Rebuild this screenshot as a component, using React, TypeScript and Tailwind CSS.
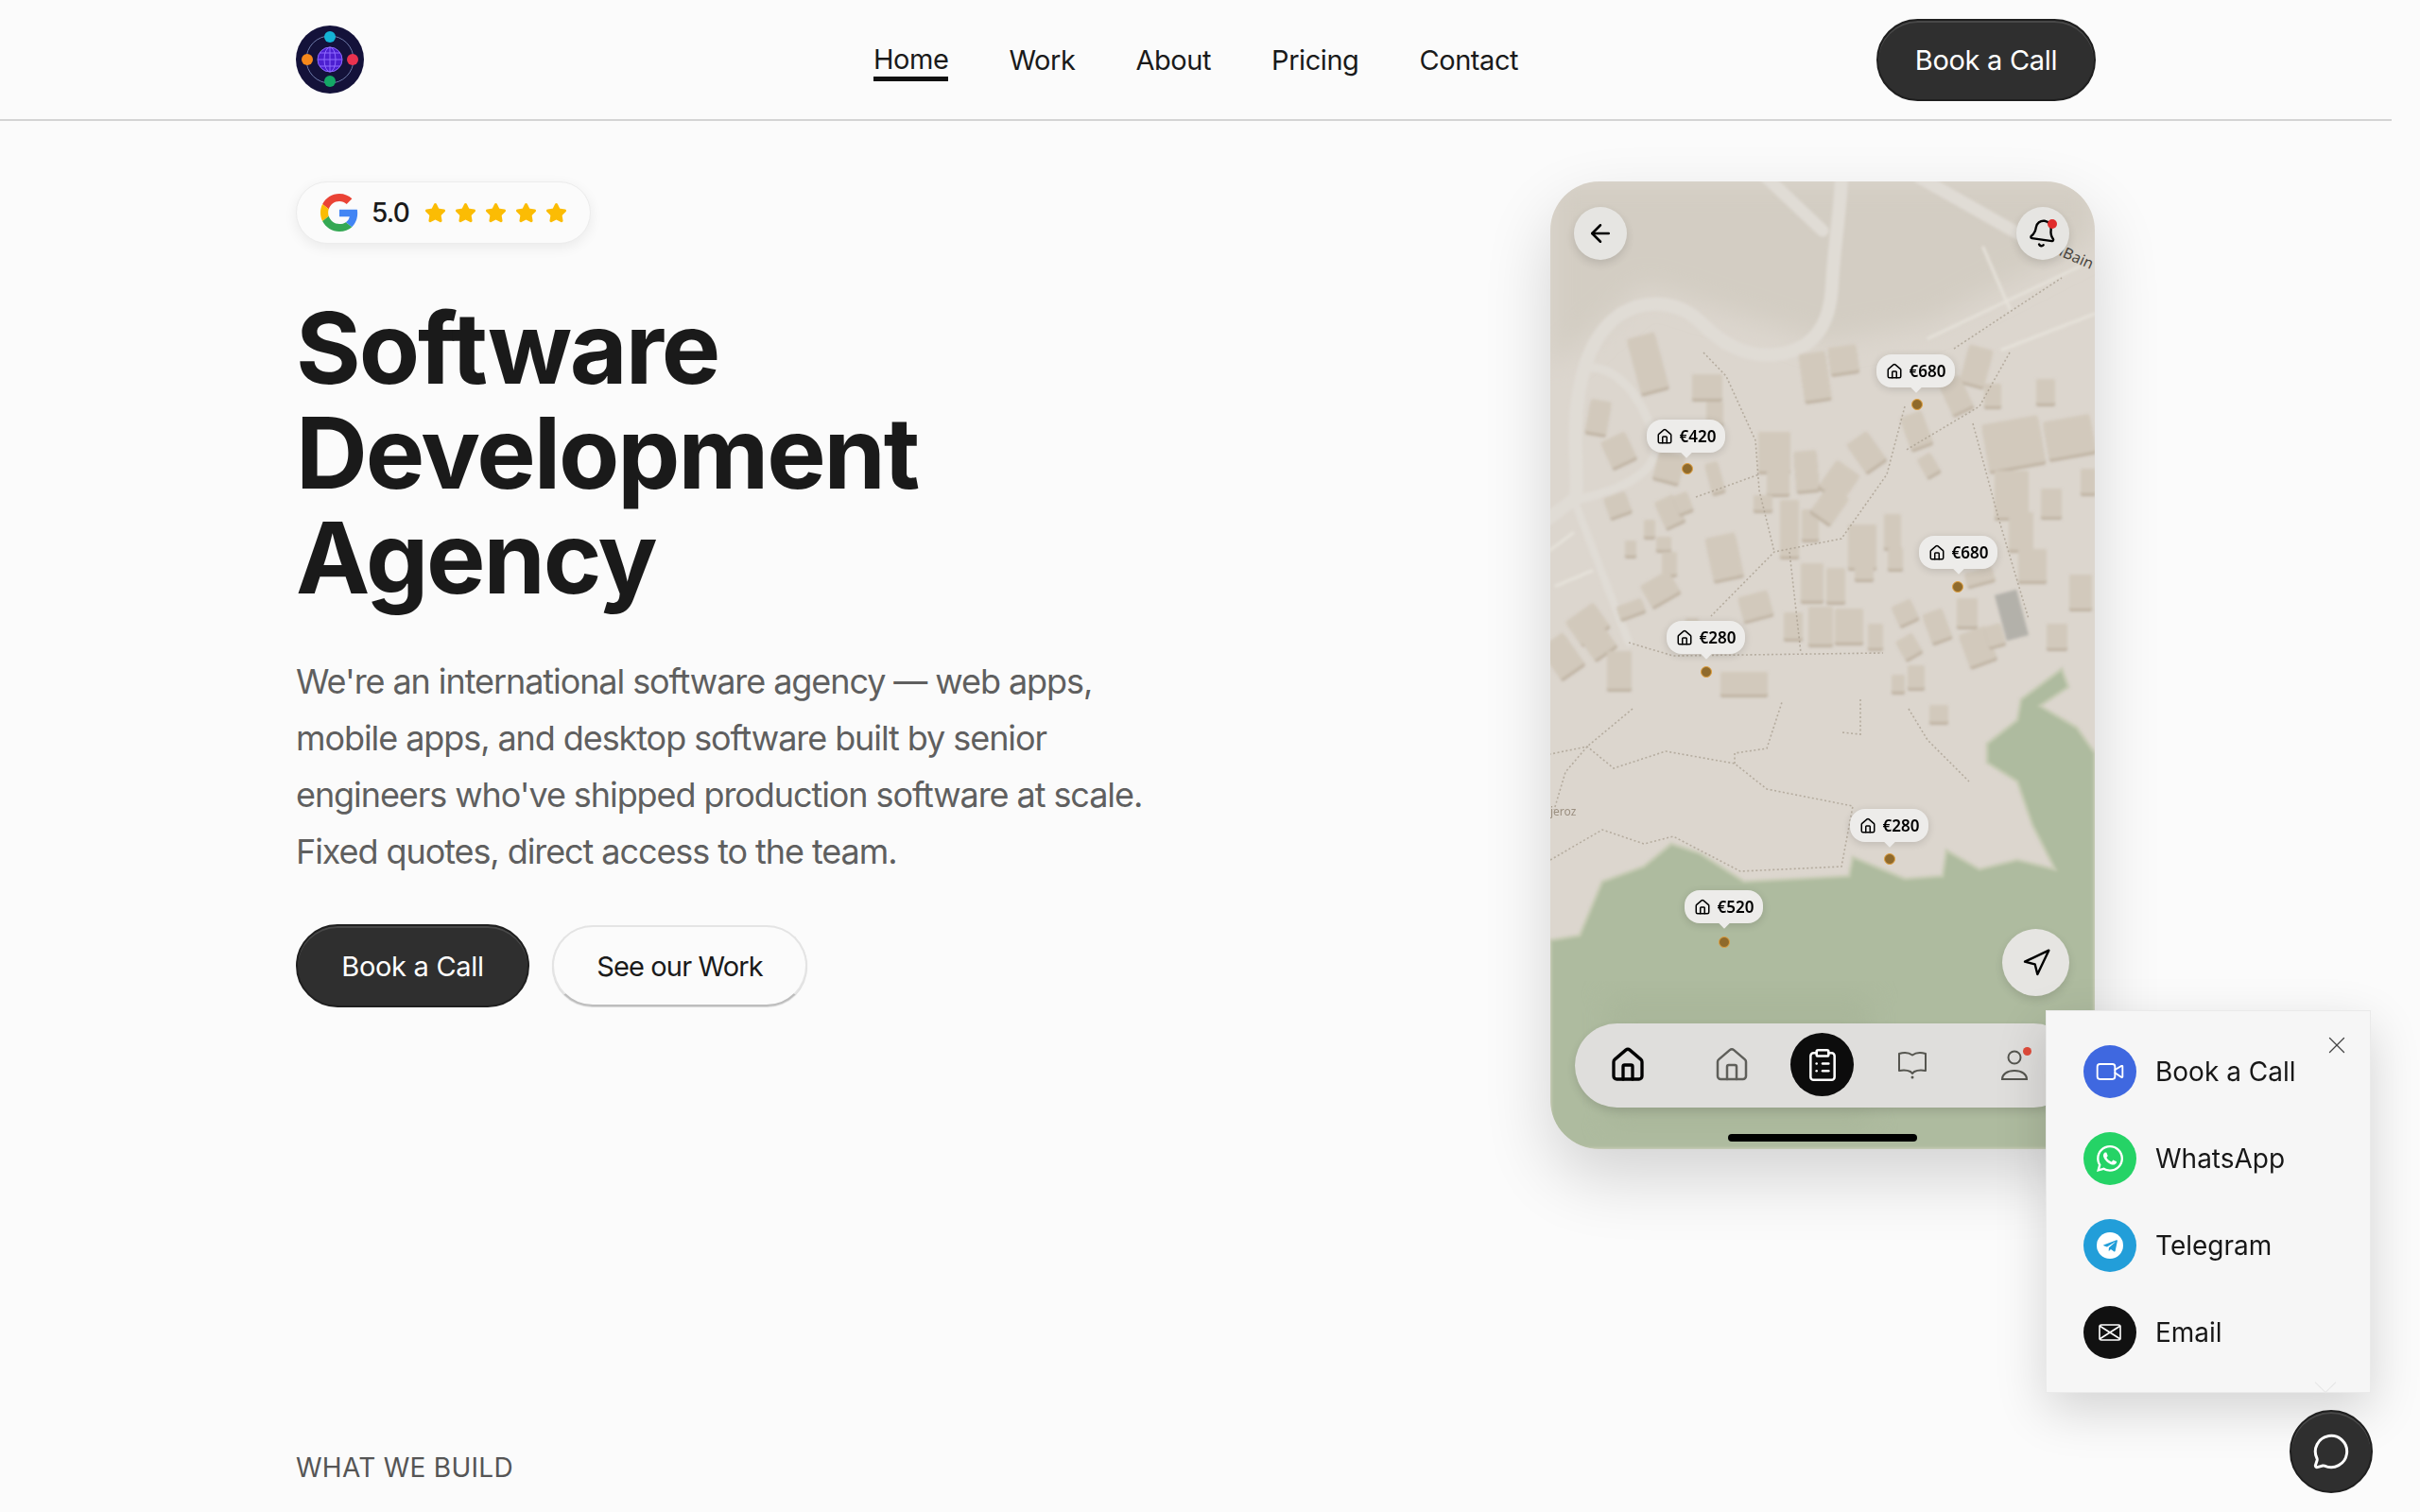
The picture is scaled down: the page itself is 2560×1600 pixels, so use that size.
import { ArrowLeft, Bell, ClipboardList, House, MessageCircle, Navigation, Star, Video, X } from "lucide-react";
import { FaTelegramPlane, FaWhatsapp } from "react-icons/fa";

const FONT = "font-['Inter','Liberation_Sans',sans-serif]";

// [center x, center y, w, h, rotation] in map coordinates
const buildings = [
  [103, 192, 30, 60, -15], [51, 249, 22, 35, 10], [72, 284, 28, 30, -25], [166, 217, 32, 26, 0], [126, 302, 28, 30, 15],
  [174, 245, 18, 24, 0], [174, 313, 14, 32, -15], [280, 206, 28, 50, -8], [310, 188, 30, 28, -8], [237, 286, 34, 42, 0],
  [241, 318, 24, 26, 0], [271, 306, 24, 42, -5], [306, 317, 30, 34, 35], [334, 286, 26, 36, -35], [451, 195, 26, 40, 15],
  [429, 226, 24, 36, -25], [468, 226, 18, 24, 0], [524, 222, 20, 26, 0], [387, 263, 24, 36, -20], [490, 277, 60, 50, -10],
  [549, 270, 50, 40, -10], [488, 331, 36, 50, 0], [498, 370, 26, 40, 0], [510, 406, 30, 34, 0], [561, 434, 24, 36, 0],
  [569, 317, 16, 26, 0], [253, 367, 20, 60, 0], [275, 363, 18, 32, 0], [296, 342, 26, 34, 35], [330, 386, 30, 46, 0],
  [362, 370, 18, 36, 0], [184, 397, 32, 46, -12], [365, 399, 16, 22, 0], [277, 424, 24, 40, 0], [302, 427, 20, 36, 0],
  [332, 413, 20, 16, 0], [217, 449, 32, 26, -15], [126, 349, 22, 30, -25], [71, 342, 24, 22, -20], [105, 367, 12, 18, 0],
  [85, 388, 12, 16, 0], [120, 383, 16, 14, 0], [126, 404, 16, 24, 0], [116, 431, 34, 26, -30], [85, 452, 28, 14, -20],
  [39, 468, 36, 30, -35], [51, 488, 28, 26, -35], [12, 502, 30, 40, -35], [73, 517, 26, 40, 0], [257, 470, 20, 28, 0],
  [286, 470, 26, 40, 0], [316, 470, 30, 36, 0], [344, 481, 16, 26, 0], [375, 456, 22, 22, -25], [409, 470, 22, 32, -20],
  [441, 456, 22, 30, 0], [452, 492, 30, 36, -20], [379, 492, 20, 22, -30], [454, 418, 30, 14, -15], [536, 481, 22, 26, 0],
  [205, 531, 50, 24, 0], [368, 531, 14, 18, 0], [387, 524, 18, 24, 0], [411, 563, 20, 18, 0], [140, 340, 16, 20, -20],
  [225, 340, 20, 16, 0], [150, 470, 14, 16, 0], [400, 300, 16, 22, -30], [530, 340, 22, 30, 0], [470, 480, 18, 22, -15],
];

const dottedPaths = [
  "162,181 186,206 217,274 221,327 237,392",
  "154,334 221,310",
  "375,238 356,310 308,378 237,392 170,460",
  "427,177 486,138 541,102",
  "486,181 454,238 375,285",
  "447,256 474,356 506,463",
  "253,392 265,499",
  "83,488 130,502 352,499",
  "0,718 55,686 99,701 130,693 201,730 308,725 320,661 229,643 195,616 122,603 67,621 39,598 0,606",
  "39,598 16,625 4,665",
  "195,616 195,605 229,600 245,551",
  "328,548 328,585 308,583",
  "379,558 399,591 443,635",
  "87,558 39,598",
];

const pins = [
  { price: "€680", left: 345, top: 183, dotX: 388, dotY: 236 },
  { price: "€420", left: 102, top: 252, dotX: 145, dotY: 304 },
  { price: "€680", left: 390, top: 375, dotX: 431, dotY: 429 },
  { price: "€280", left: 123, top: 465, dotX: 165, dotY: 519 },
  { price: "€280", left: 317, top: 664, dotX: 359, dotY: 717 },
  { price: "€520", left: 142, top: 750, dotX: 184, dotY: 805 },
];

function Logo() {
  return (
    <svg viewBox="0 0 72 72" className="h-[72px] w-[72px]">
      <circle cx="36" cy="36" r="36" fill="#14123a" />
      <circle cx="36" cy="36" r="25" fill="none" stroke="#6d7aa8" strokeWidth="1" />
      <circle cx="36" cy="36" r="13" fill="#4c1fd0" />
      <g fill="none" stroke="#8f6bff" strokeWidth="1">
        <circle cx="36" cy="36" r="13" />
        <ellipse cx="36" cy="36" rx="6" ry="13" />
        <path d="M36 23v26M23 36h26M25 29h22M25 43h22" />
      </g>
      <circle cx="36" cy="12" r="6" fill="#14b3d6" />
      <circle cx="60" cy="36" r="6" fill="#e8324f" />
      <circle cx="36" cy="59" r="6" fill="#14a866" />
      <circle cx="12" cy="36" r="6" fill="#f7881b" />
    </svg>
  );
}

function GoogleG() {
  return (
    <svg viewBox="0 0 48 48" className="h-10 w-10">
      <path fill="#EA4335" d="M24 9.5c3.54 0 6.71 1.22 9.21 3.6l6.85-6.85C35.9 2.38 30.47 0 24 0 14.62 0 6.51 5.38 2.56 13.22l7.98 6.19C12.43 13.72 17.74 9.5 24 9.5z" />
      <path fill="#4285F4" d="M46.98 24.55c0-1.57-.15-3.09-.38-4.55H24v9.02h12.94c-.58 2.96-2.26 5.48-4.78 7.18l7.73 6c4.51-4.18 7.09-10.36 7.09-17.65z" />
      <path fill="#FBBC05" d="M10.53 28.59c-.48-1.45-.76-2.99-.76-4.59s.27-3.14.76-4.59l-7.98-6.19C.92 16.46 0 20.12 0 24c0 3.88.92 7.54 2.56 10.78l7.97-6.19z" />
      <path fill="#34A853" d="M24 48c6.48 0 11.93-2.13 15.89-5.81l-7.73-6c-2.15 1.45-4.92 2.3-8.16 2.3-6.26 0-11.57-4.22-13.47-9.91l-7.98 6.19C6.51 42.62 14.62 48 24 48z" />
    </svg>
  );
}

function PersonIcon() {
  return (
    <svg viewBox="0 0 30 34" className="h-[34px] w-[30px]" fill="none" stroke="#55554f" strokeWidth="2">
      <circle cx="15" cy="9" r="6.5" />
      <path d="M2 32c0-5 5-9 13-9s13 4 13 9z" />
    </svg>
  );
}

function BookIcon() {
  return (
    <svg viewBox="0 0 32 32" className="h-8 w-8" fill="none" stroke="#55554f" strokeWidth="2" strokeLinejoin="round">
      <path d="M2 4c5-1.5 10-1.5 14 1.5C20 2.500 25 2.500 30 4v18c-5-1-9-.5-12 1l-2 2-2-2c-3-1.500-7-2-12-1z" />
      <circle cx="16" cy="29" r="1.500" fill="#55554f" stroke="none" />
    </svg>
  );
}

function MapDrawing() {
  return (
    <svg viewBox="0 0 576 1024" className="absolute inset-0 h-full w-full">
      <defs>
        <filter id="soft">
          <feGaussianBlur stdDeviation="1.800" />
        </filter>
        <filter id="edge">
          <feGaussianBlur stdDeviation="14" />
        </filter>
      </defs>
      <rect width="576" height="1024" fill="#dcd6ce" />
      <path d="M0 0h576v60L400 150 290 170 100 110 0 200z" fill="#d3cdc3" filter="url(#edge)" />
      <g fill="none" stroke="#e0dcd5" strokeLinecap="round" strokeLinejoin="round" filter="url(#soft)">
        <path strokeWidth="14" d="M308 -4C306 40 300 70 298 110C296 150 280 178 240 183C205 187 180 170 160 150C135 125 100 125 75 140C45 160 32 200 28 240C24 280 30 315 27 335L-4 358" />
        <path strokeWidth="13" d="M229 -4L288 52" />
        <path strokeWidth="13" d="M391 -4L500 58" />
        <path strokeWidth="9" d="M39 197C70 195 95 225 110 270C120 305 80 325 31 336" />
        <path strokeWidth="8" d="M27 342L83 488" />
        <path strokeWidth="3" stroke="#e6e2da" d="M458 70L486 135M478 178L576 140M0 390L24 372M6 428L44 412M400 166L560 90" />
      </g>
      <g filter="url(#soft)">
        {buildings.map(([x, y, w, h, r], i) => (
          <g key={i} transform={`translate(${x} ${y}) rotate(${r})`}>
            <rect x={-w / 2} y={-h / 2 + 3} width={w} height={h} rx="2" fill="#bfb3a3" />
            <rect x={-w / 2} y={-h / 2} width={w} height={h} rx="2" fill="#d2c9bc" />
          </g>
        ))}
        <rect x="476" y="434" width="24" height="50" transform="rotate(-15 488 459)" fill="#b3b1aa" />
      </g>
      <path
        d="M0 803L31 798L55 741L99 725L128 701L158 711L205 741L316 735L320 715L375 738L415 735L419 708L454 728L494 718L534 728L510 681L494 635L462 615L462 595L494 570L498 548L541 516L548 535L518 555L557 578L576 605V1024H0Z"
        fill="#aebb9f"
        stroke="#c6cab4"
        strokeWidth="3"
        filter="url(#soft)"
      />
      <path d="M60 860H340V1000H60z" fill="#a5b296" opacity="0.5" filter="url(#edge)" />
      <g fill="none" stroke="#a89e8f" strokeWidth="1.600" strokeDasharray="2 2.500" opacity="0.75">
        {dottedPaths.map((points, i) => (
          <polyline key={i} points={points} />
        ))}
      </g>
    </svg>
  );
}

function MapButton({ className, children }: { className: string; children: React.ReactNode }) {
  return (
    <div className={`absolute flex items-center justify-center rounded-full bg-[#e6e5e2] shadow-[0_4px_10px_rgba(0,0,0,0.12)] ${className}`}>
      {children}
    </div>
  );
}

function PhoneMock() {
  return (
    <div className="relative mr-px h-[1024px] w-[576px] overflow-hidden rounded-[52px] shadow-[0_30px_70px_rgba(0,0,0,0.16)]">
      <MapDrawing />
      <span className="absolute left-[538px] top-[72px] rotate-[24deg] font-['Noto_Sans',sans-serif] text-[16px] leading-none text-[#4a463f]">lBain</span>
      <span className="absolute left-0 top-[661px] font-['Noto_Sans',sans-serif] text-[12px] leading-none text-[#9b8f80]">jeroz</span>

      <MapButton className="left-[25px] top-[27px] h-14 w-14">
        <ArrowLeft size={30} strokeWidth={2} className="text-black" />
      </MapButton>
      <MapButton className="left-[493px] top-[27px] h-14 w-14">
        <Bell size={32} strokeWidth={1.800} className="rotate-[8deg] text-black" />
        <span className="absolute left-[33px] top-[13px] h-[10px] w-[10px] rounded-full bg-[#e02b2b]" />
      </MapButton>
      <MapButton className="left-[478px] top-[791px] h-[71px] w-[71px]">
        <Navigation size={32} strokeWidth={1.800} className="text-black" />
      </MapButton>

      {pins.map((pin, i) => (
        <div key={i}>
          <div
            className="absolute flex h-[35px] w-[83px] items-center justify-center gap-[7px] rounded-2xl bg-[#edecea] shadow-[0_2px_8px_rgba(0,0,0,0.14)]"
            style={{ left: pin.left, top: pin.top }}
          >
            <House size={18} strokeWidth={2} className="text-black" />
            <span className="font-['Noto_Sans',sans-serif] text-[17px] font-semibold leading-none text-black">{pin.price}</span>
            <span className="absolute left-1/2 top-[31px] h-2 w-2 -translate-x-1/2 rotate-45 bg-[#edecea]" />
          </div>
          <span
            className="absolute h-[12px] w-[12px] -translate-x-1/2 -translate-y-1/2 rounded-full border border-[#e0a040] bg-[#8f6a2c]"
            style={{ left: pin.dotX, top: pin.dotY }}
          />
        </div>
      ))}

      {/* Bottom bar */}
      <div className="absolute left-[26px] top-[891px] h-[89px] w-[530px] rounded-full bg-[#dfdedc] shadow-[0_4px_10px_rgba(0,0,0,0.12)]">
        <House size={40} strokeWidth={2} className="absolute left-[36px] top-[24px] text-black" />
        <House size={40} strokeWidth={1.500} className="absolute left-[146px] top-[24px] text-[#5f5f5a]" />
        <div className="absolute left-[228px] top-[10px] flex h-[67px] w-[67px] items-center justify-center rounded-full bg-[#0c0c0c]">
          <ClipboardList size={38} strokeWidth={1.600} className="text-white" />
        </div>
        <div className="absolute left-[341px] top-[28px]">
          <BookIcon />
        </div>
        <div className="absolute left-[450px] top-[27px]">
          <PersonIcon />
        </div>
        <span className="absolute left-[474px] top-[25px] h-[9px] w-[9px] rounded-full bg-[#e04b3a]" />
      </div>
      <div className="absolute left-[188px] top-[1008px] h-2 w-[200px] rounded-full bg-black" />
    </div>
  );
}

function ContactRow({ bg, label, children }: { bg: string; label: string; children: React.ReactNode }) {
  return (
    <div className="flex h-14 items-center gap-5">
      <div className={`flex h-14 w-14 items-center justify-center rounded-full ${bg}`}>{children}</div>
      <span className="text-[28px] font-normal leading-none text-[#171717]">{label}</span>
    </div>
  );
}

function ContactPopover() {
  return (
    <div className="fixed left-[2164px] top-[1069px] h-[405px] w-[344px] border border-[#eaeaea] bg-[#f6f6f6] shadow-[0_18px_50px_rgba(0,0,0,0.16)]">
      <X size={30} strokeWidth={1} className="absolute left-[292px] top-[21px] text-[#444]" />
      <div className="flex flex-col gap-9 pl-[39px] pt-[36px]">
        <ContactRow bg="bg-[#3f68e0]" label="Book a Call">
          <Video size={32} strokeWidth={1.400} className="text-white" />
        </ContactRow>
        <ContactRow bg="bg-[#25d366]" label="WhatsApp">
          <FaWhatsapp size={32} className="text-white" />
        </ContactRow>
        <ContactRow bg="bg-[#229ed9]" label="Telegram">
          <div className="flex h-7 w-7 items-center justify-center rounded-full bg-white">
            <FaTelegramPlane size={17} className="text-[#229ed9]" />
          </div>
        </ContactRow>
        <ContactRow bg="bg-[#111111]" label="Email">
          <svg viewBox="0 0 24 18" className="h-[18px] w-6" fill="none" stroke="white" strokeWidth="1.600">
            <rect x="1" y="1" width="22" height="16" rx="2" />
            <path d="M1 2l22 14M23 2L1 16" />
          </svg>
        </ContactRow>
      </div>
      <span className="absolute left-[287px] top-[385px] h-4 w-4 rotate-45 border-b border-r border-[#e6e6e6]" />
    </div>
  );
}

export default function App() {
  return (
    <div className={`relative h-[1600px] w-[2560px] overflow-hidden bg-[#fbfbfb] text-[#1a1a1a] ${FONT}`}>
      <div className="w-[2530px]">
        {/* Header */}
        <header className="h-[128px] border-b-2 border-[#d4d4d4]">
          <div className="mx-auto grid h-[126px] w-[1904px] grid-cols-[1fr_auto_1fr] items-center">
            <Logo />
            <nav className="flex items-center gap-16 text-[29px] leading-none tracking-[-0.015em] text-[#1a1a1a]">
              <a className="border-b-[5px] border-[#111] pb-1 pt-2">Home</a>
              <a>Work</a>
              <a>About</a>
              <a>Pricing</a>
              <a>Contact</a>
            </nav>
            <button className="h-[87px] w-[232px] justify-self-end rounded-full border-2 border-[#1f1f1f] bg-[#2f2f2f] text-[29px] leading-none tracking-[-0.01em] text-white shadow-[inset_0_2px_0_rgba(255,255,255,0.12)]">
              Book a Call
            </button>
          </div>
        </header>

        <main className="mx-auto w-[1904px]">
          {/* Hero */}
          <section className="flex items-start justify-between pt-[64px]">
            <div className="w-[1000px]">
              <div className="flex h-[66px] w-[312px] items-center gap-[14px] rounded-full border border-[#ececec] bg-[#fbfbfb] pl-[25px] shadow-[0_4px_14px_rgba(0,0,0,0.07)]">
                <GoogleG />
                <span className="text-[28px] font-medium leading-none tracking-[-0.03em] text-[#1a1a1a]">5.0</span>
                <div className="ml-0.5 flex gap-[9px]">
                  {[0, 1, 2, 3, 4].map((i) => (
                    <Star key={i} size={23} className="fill-[#fbbc04] text-[#fbbc04]" />
                  ))}
                </div>
              </div>
              <h1 className="mt-[54px] text-[105px] font-bold leading-[111px] tracking-[-0.02em] text-[#1a1a1a]">
                Software
                <br />
                Development
                <br />
                Agency
              </h1>
              <p className="mt-[46px] text-[36px] leading-[60px] tracking-[-0.03em] text-[#5f5f5f]">
                We're an international software agency — web apps,
                <br />
                mobile apps, and desktop software built by senior
                <br />
                engineers who've shipped production software at scale.
                <br />
                Fixed quotes, direct access to the team.
              </p>
              <div className="mt-[47px] flex items-center gap-6">
                <button className="h-[88px] w-[247px] rounded-full border-2 border-[#1f1f1f] bg-[#2f2f2f] text-[29px] leading-none tracking-[-0.01em] text-white shadow-[inset_0_2px_0_rgba(255,255,255,0.12)]">
                  Book a Call
                </button>
                <button className="h-[86px] w-[270px] rounded-full border-2 border-[#e4e4e4] border-b-[#bdbdbd] bg-[#fbfbfb] text-[29px] leading-none tracking-[-0.03em] text-[#1a1a1a] shadow-[0_1px_1px_rgba(0,0,0,0.15)]">
                  See our Work
                </button>
              </div>
            </div>
            <PhoneMock />
          </section>

          {/* Next section */}
          <h2 className="mt-[323px] text-[28px] font-normal uppercase leading-none tracking-[0.01em] text-[#555]">What we build</h2>
        </main>
      </div>

      <ContactPopover />
      <button className="fixed left-[2422px] top-[1492px] flex h-[88px] w-[88px] items-center justify-center rounded-full border-2 border-[#1f1f1f] bg-[#2f2f2f] shadow-[inset_0_2px_0_rgba(255,255,255,0.12)]">
        <MessageCircle size={40} strokeWidth={1.800} className="text-white" />
      </button>
    </div>
  );
}
